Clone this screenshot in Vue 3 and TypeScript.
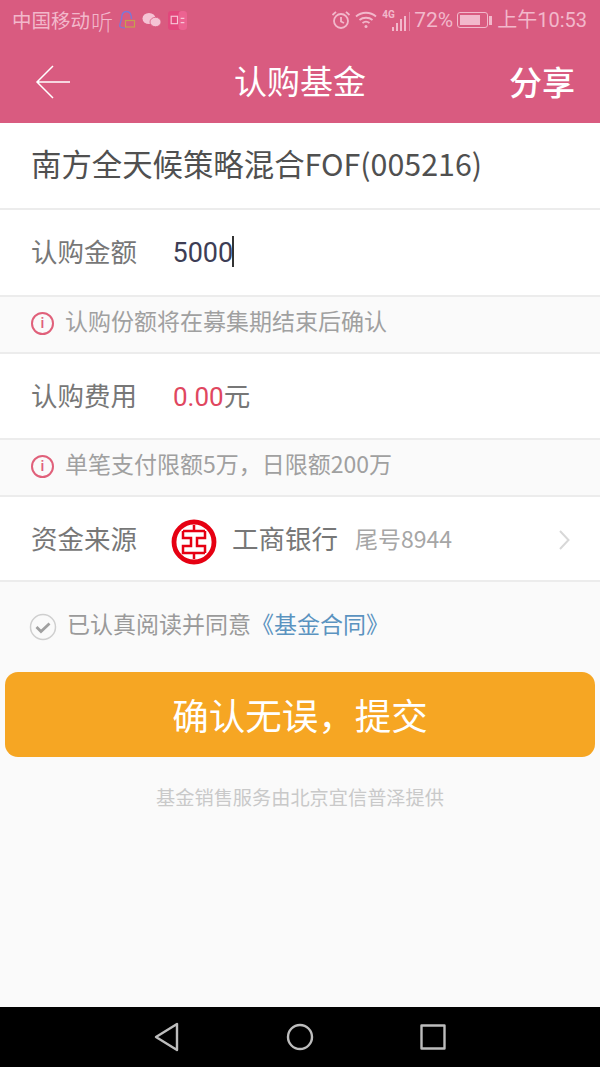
<script setup lang="ts">
const signalBars: number[] = [4, 8, 12, 15]
</script>

<template>
  <div class="screen">
    <div class="top">
      <div class="status">
        <div class="status-left">
          <span class="carrier">中国移动</span>
          <span class="ting">听</span>
          <svg class="ic-qq" width="18" height="20" viewBox="0 0 18 20">
            <path d="M2 17C1 14 3 12 3.500 9C3.500 4 5.500 1.500 8.500 1.500C11.500 1.500 13.500 4 13.500 9" fill="none" stroke="#7a78d8" stroke-width="1.300" />
            <path d="M2 17C3.500 17.500 5 18 7 18" fill="none" stroke="#7a78d8" stroke-width="1.300" />
            <rect x="7.500" y="10.500" width="9" height="6.500" fill="none" stroke="#c6a04e" stroke-width="1.200" />
          </svg>
          <svg class="ic-wx" width="20" height="16" viewBox="0 0 20 16">
            <ellipse cx="7" cy="6.500" rx="6.500" ry="5.500" fill="#f5c3d4" />
            <ellipse cx="13.500" cy="10" rx="5.500" ry="4.700" fill="#f5c3d4" stroke="#d95b80" stroke-width="0.800" />
          </svg>
          <svg class="ic-app" width="19" height="19" viewBox="0 0 18 18">
            <rect width="18" height="18" rx="3" fill="#e2477c" />
            <rect x="10" width="8" height="18" rx="3" fill="#ec6391" />
            <rect x="3" y="5" width="6" height="7" fill="none" stroke="#f7c4d6" stroke-width="1.100" />
            <path d="M12 7H15.500M12 11H15.500" stroke="#f7c4d6" stroke-width="1.100" />
          </svg>
        </div>
        <div class="status-right">
          <svg width="20" height="20" viewBox="0 0 20 20" fill="none" stroke="#f2b8cb" stroke-width="1.800">
            <circle cx="10" cy="11" r="7" />
            <path d="M10 7V11.500L13 13M1.500 5L5 1.800M18.500 5L15 1.800" />
          </svg>
          <svg class="ic-wifi" width="22" height="18" viewBox="0 0 22 18" fill="none" stroke="#f2b8cb" stroke-width="1.800">
            <path d="M1 5.500C6.500 0.500 15.500 0.500 21 5.500M4.500 9C8 6 14 6 17.500 9M7.500 12C9.500 10.500 12.500 10.500 14.500 12" />
            <circle cx="11" cy="15.500" r="1.500" fill="#f2b8cb" stroke="none" />
          </svg>
          <div class="signal">
            <span class="g4">4G</span>
            <div class="bars">
              <i v-for="h in signalBars" :key="h" :style="{ height: h + 'px' }"></i>
              <b class="divider"></b>
            </div>
          </div>
          <span class="pct">72%</span>
          <div class="battery">
            <div class="battery-body"><div class="battery-fill"></div></div>
            <div class="battery-tip"></div>
          </div>
          <span class="clock">上午10:53</span>
        </div>
      </div>
      <header class="nav">
        <svg class="back" width="36" height="34" viewBox="0 0 36 34" fill="none" stroke="#fff" stroke-width="1.500">
          <path d="M18 1L2 17L18 33M2 17H35" />
        </svg>
        <h1>认购基金</h1>
        <span class="share">分享</span>
      </header>
    </div>

    <main class="body">
      <div class="fund">南方全天候策略混合FOF(005216)</div>
      <div class="row row-amount">
        <span class="label">认购金额</span>
        <span class="amount">5000</span><span class="caret"></span>
      </div>
      <div class="notice">
        <span class="info">i</span>
        <span class="notice-text">认购份额将在募集期结束后确认</span>
      </div>
      <div class="row row-fee">
        <span class="label">认购费用</span>
        <span class="fee"><em>0.00</em>元</span>
      </div>
      <div class="notice">
        <span class="info">i</span>
        <span class="notice-text">单笔支付限额5万，日限额200万</span>
      </div>
      <div class="row row-source">
        <span class="label">资金来源</span>
        <svg class="bank-logo" width="46" height="46" viewBox="0 0 46 46">
          <circle cx="23" cy="23" r="20" fill="none" stroke="#e60012" stroke-width="4.800" />
          <path d="M12 12H34M12 12V19H20V27H12V34H34M34 12V19H26V27H34V34M23 6V12M23 34V40" fill="none" stroke="#e60012" stroke-width="2.500" />
        </svg>
        <span class="bank">工商银行</span>
        <span class="tail">尾号8944</span>
        <svg class="chevron" width="12" height="20" viewBox="0 0 12 20" fill="none" stroke="#d8d8d8" stroke-width="2">
          <path d="M2 1L10.500 10L2 19" />
        </svg>
      </div>
      <div class="agree">
        <svg width="28" height="28" viewBox="0 0 28 28" fill="none">
          <circle cx="14" cy="14" r="12.500" stroke="#cfcfcf" stroke-width="1.500" />
          <path d="M7.500 14L12 18.500L20.500 10.500" stroke="#a0a0a0" stroke-width="2.800" />
        </svg>
        <span class="agree-text">已认真阅读并同意<a>《基金合同》</a></span>
      </div>
      <button class="submit" type="button">确认无误，提交</button>
      <p class="foot">基金销售服务由北京宜信普泽提供</p>
    </main>

    <footer class="sysnav">
      <svg width="26" height="30" viewBox="0 0 26 30" fill="none" stroke="#bdbdbd" stroke-width="2.400" stroke-linejoin="round">
        <path d="M23 2V28L2 15Z" />
      </svg>
      <svg width="30" height="30" viewBox="0 0 30 30" fill="none" stroke="#bdbdbd" stroke-width="2.400">
        <circle cx="15" cy="15" r="12" />
      </svg>
      <svg width="26" height="26" viewBox="0 0 26 26" fill="none" stroke="#bdbdbd" stroke-width="2.400" stroke-linejoin="round">
        <rect x="1.500" y="1.500" width="23" height="23" />
      </svg>
    </footer>
  </div>
</template>

<style>
html, body { margin: 0; padding: 0; background: #fafafa; }
</style>

<style scoped>
.screen {
  width: 600px;
  height: 1067px;
  display: flex;
  flex-direction: column;
  overflow: hidden;
  background: #fafafa;
  font-family: "Noto Sans CJK SC", "Roboto", sans-serif;
  color: #666;
}
.top { background: #d95b80; height: 123px; flex: none; }
.status {
  height: 44px;
  box-sizing: border-box;
  padding: 0 13px 4px 12px;
  display: flex;
  justify-content: space-between;
  align-items: center;
  color: #f2b8cb;
  font-size: 19px;
  line-height: 40px;
}
.status-left, .status-right { display: flex; align-items: center; }
.carrier { font-size: 19.500px; }
.ting { font-size: 22px; margin-left: 1px; font-weight: 300; }
.ic-qq { margin-left: 5px; }
.ic-wx { margin-left: 6px; }
.ic-app { margin-left: 6px; }
.ic-wifi { margin-left: 4px; }
.signal { position: relative; width: 28px; height: 19px; margin-left: 5px; margin-top: 3px; }
.g4 { position: absolute; left: 0; top: -3px; font: bold 10px/11px "Roboto", sans-serif; }
.bars { position: absolute; right: 0; bottom: 0; display: flex; gap: 1.500px; align-items: flex-end; }
.bars i { display: block; width: 2.500px; background: #f2b8cb; }
.bars .divider { display: block; width: 1.500px; height: 19px; margin-left: 1px; background: #e58aa8; }
.pct { font-family: "Roboto", sans-serif; font-size: 21px; margin-left: 4px; }
.battery { display: flex; align-items: center; margin-left: 4px; }
.battery-body { width: 31px; height: 16px; padding: 2px; box-sizing: border-box; border: 1.500px solid #f2b8cb; border-radius: 3px; }
.battery-fill { width: 78%; height: 100%; background: #f2b8cb; }
.battery-tip { width: 3px; height: 9px; margin-left: 1px; background: #f2b8cb; }
.clock { font-size: 20px; margin-left: 5px; font-family: "Roboto", "Noto Sans CJK SC", sans-serif; }
.nav {
  position: relative;
  height: 79px;
  box-sizing: border-box;
  padding-bottom: 6px;
  display: flex;
  align-items: center;
  justify-content: center;
  color: #fff;
}
.nav h1 { margin: 0; font-size: 33px; font-weight: 400; line-height: 1; }
.back { position: absolute; left: 35px; top: 21px; }
.share { position: absolute; right: 25px; top: 19px; font-size: 33px; line-height: 36px; font-weight: 500; }

.body { flex: 1; display: flex; flex-direction: column; }
.fund {
  height: 87px;
  flex: none;
  box-sizing: border-box;
  padding: 0 31px 5px;
  display: flex;
  align-items: center;
  background: #fff;
  border-bottom: 2px solid #ececec;
  font-size: 30.400px;
  color: #505050;
  white-space: nowrap;
}
.row {
  flex: none;
  box-sizing: border-box;
  padding: 0 30px 4px 31px;
  display: flex;
  align-items: center;
  background: #fff;
  border-bottom: 2px solid #ececec;
}
.row-amount { height: 87px; }
.row-fee { height: 86px; }
.row-source { height: 85px; padding-bottom: 2px; }
.label { width: 141px; flex: none; font-size: 26.500px; color: #777; }
.amount { font-size: 27px; color: #3d3d55; font-family: "Roboto", sans-serif; margin: 4px 0 0 0.500px; }
.caret { width: 1.500px; height: 31px; background: #333; margin-left: -1px; margin-top: 2px; }
.fee { font-size: 26.500px; color: #777; margin-left: 1px; }
.fee em { font-style: normal; font-size: 26px; color: #e0475f; font-family: "Roboto", sans-serif; }
.notice {
  height: 57px;
  flex: none;
  box-sizing: border-box;
  padding: 0 0 2px 31px;
  display: flex;
  align-items: center;
  gap: 11px;
  background: #fafafa;
  border-bottom: 2px solid #ececec;
  font-size: 23px;
  color: #a0a0a0;
}
.notice-text { margin-bottom: 8px; }
.info {
  width: 23px;
  height: 23px;
  box-sizing: border-box;
  border: 2px solid #e0607a;
  border-radius: 50%;
  display: flex;
  align-items: center;
  justify-content: center;
  color: #e0607a;
  font: 500 15px/1 "Roboto", sans-serif;
}
.bank-logo { flex: none; margin-left: -1px; margin-top: 8px; }
.bank { margin-left: 15px; font-size: 26.500px; color: #777; }
.tail { margin-left: 17px; font-size: 23px; color: #a6a6a6; }
.chevron { margin-left: auto; margin-top: 5px; }
.agree {
  height: 90px;
  flex: none;
  padding-left: 29px;
  display: flex;
  align-items: center;
  gap: 10px;
  box-sizing: border-box;
}
.agree-text { font-size: 23px; color: #9a9a9a; white-space: nowrap; margin-bottom: 8px; }
.agree-text a { color: #5b93c0; }
.submit {
  margin: 0 5px;
  height: 85px;
  flex: none;
  border: 0;
  border-radius: 13px;
  background: #f6a623;
  color: #fff;
  font-family: inherit;
  font-size: 36.500px;
  padding: 0;
}
.foot {
  margin: 26px 0 0;
  text-align: center;
  font-size: 19.200px;
  line-height: 28px;
  color: #c9c9c9;
}
.sysnav {
  height: 60px;
  flex: none;
  background: #000;
  display: flex;
  align-items: center;
  justify-content: space-between;
  padding: 0 154px;
}
</style>
